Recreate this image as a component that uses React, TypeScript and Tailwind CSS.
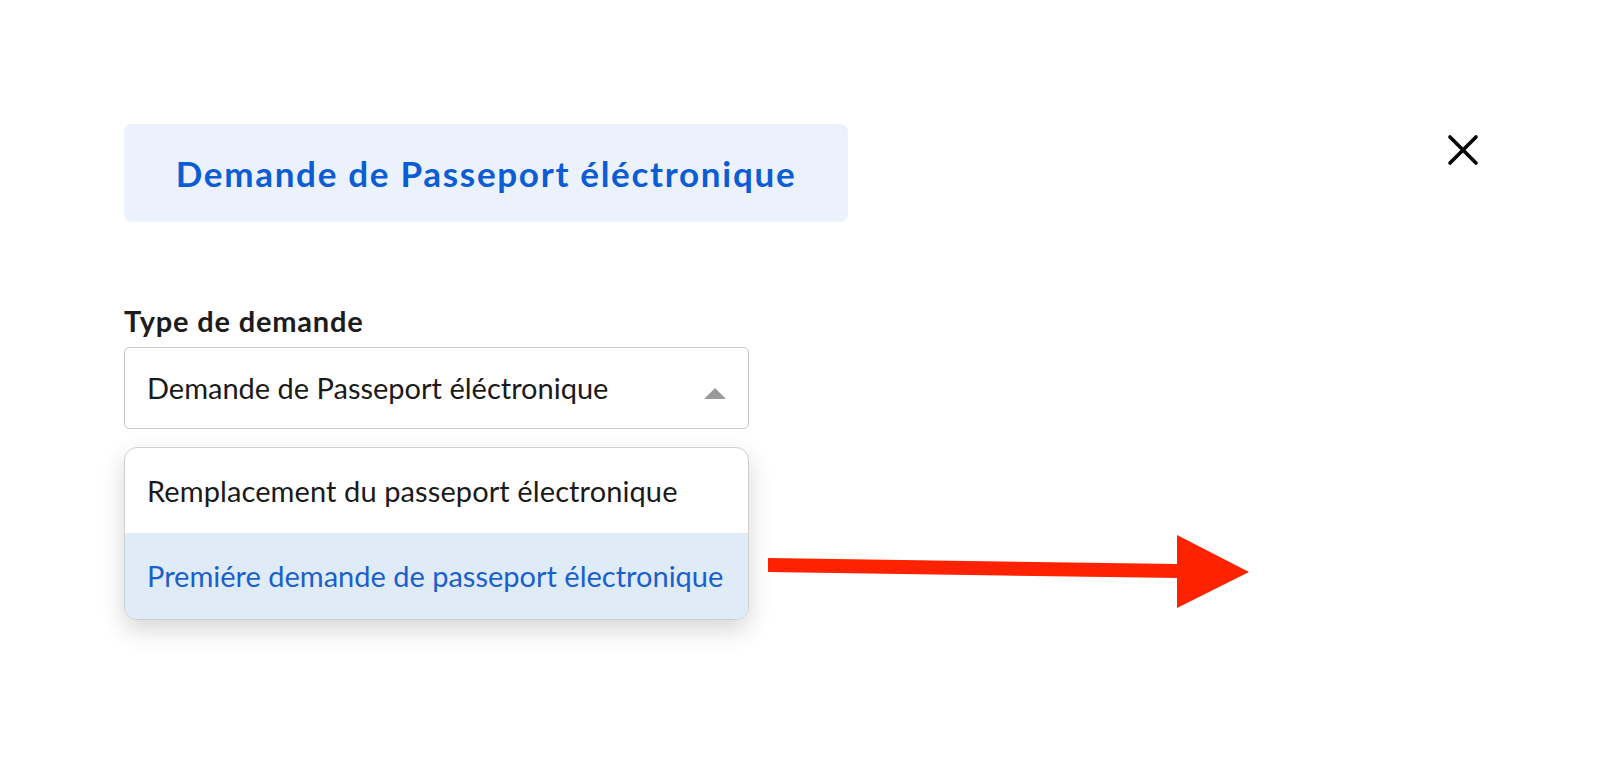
import React from "react";

export default function App() {
  return (
    <div
      className="relative w-[1600px] h-[761px] bg-white overflow-hidden"
      style={{ fontFamily: "Lato, 'Open Sans', sans-serif" }}
    >
      <div className="flex justify-between pl-[124px] pr-[121px] pt-[124px]">
        <div className="flex flex-col">
          <div className="w-[724px] h-[98px] rounded-[8px] bg-[#ebf2fc] flex items-center justify-center">
            <span className="text-[35px] font-bold text-[#0b5cd5] tracking-[1.7px] leading-none">
              Demande de Passeport éléctronique
            </span>
          </div>

          <div className="mt-[84px] text-[29px] font-bold text-[#1c1c1c] leading-[30px] tracking-[0.8px]">
            Type de demande
          </div>

          <div className="mt-[11px] w-[625px] h-[82px] border border-[#c6c6c6] rounded-[5px] flex items-center justify-between pl-[22px] pr-[22px]">
            <span className="text-[29px] text-[#1a1a1a]">Demande de Passeport éléctronique</span>
            <svg width="22" height="11" viewBox="0 0 22 11" className="mt-[10px]">
              <polygon points="11,0 22,11 0,11" fill="#9a9a9a" />
            </svg>
          </div>

          <div className="mt-[18px] w-[625px] rounded-[13px] border border-[#cfcfcf] bg-white overflow-hidden shadow-[0_10px_24px_rgba(0,0,0,0.16)]">
            <div className="h-[85px] flex items-center pl-[22px] text-[29px] text-[#1a1a1a] tracking-[0.1px]">
              Remplacement du passeport électronique
            </div>
            <div className="h-[86px] flex items-center pl-[22px] text-[29px] text-[#1b5fcc] bg-[#dfebf7]">
              Premiére demande de passeport électronique
            </div>
          </div>
        </div>

        <div className="pt-[10px]">
          <svg width="32" height="32" viewBox="0 0 32 32">
            <path d="M3 3 L29 29 M29 3 L3 29" stroke="#000" strokeWidth="3.6" strokeLinecap="round" />
          </svg>
        </div>
      </div>

      <svg
        className="absolute left-0 top-0 pointer-events-none"
        width="1600"
        height="761"
        viewBox="0 0 1600 761"
      >
        <polygon points="768,558 1178,564 1178,578 768,572" fill="#ff2200" />
        <polygon points="1177,535 1249,572 1177,608" fill="#ff2200" />
      </svg>
    </div>
  );
}
